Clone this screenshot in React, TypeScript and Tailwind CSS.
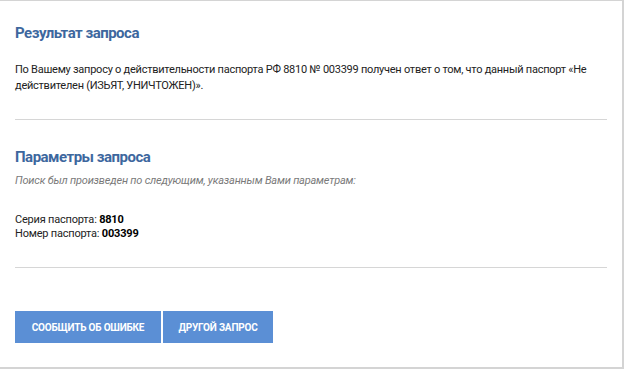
export default function App() {
  return (
    <div className="w-[624px] h-[370px] bg-white" style={{ fontFamily: 'Roboto, "Noto Sans", sans-serif' }}>
      <div className="h-[369px] border-t border-r-2 border-b-2 border-[#d4d4d4] pl-[15px] pr-[15px] flex flex-col">
        <h2 className="mt-[22px] text-[15px] leading-[20px] font-bold tracking-[-0.5px] text-[#3d679e]">
          Результат запроса
        </h2>
        <p className="mt-[19px] text-[11px] leading-[16px] tracking-[-0.25px] text-[#222]">
          <span className="whitespace-nowrap">
            По Вашему запросу о действительности паспорта РФ 8810 № 003399 получен ответ о том, что данный паспорт «Не
          </span>
          <br />
          действителен (ИЗЬЯТ, УНИЧТОЖЕН)».
        </p>
        <div className="mt-[25px] border-t border-[#d6d6d6]" />
        <h2 className="mt-[27px] text-[15px] leading-[20px] font-bold tracking-[-0.5px] text-[#3d679e]">
          Параметры запроса
        </h2>
        <p className="mt-[6px] text-[11px] leading-[16px] italic tracking-[-0.2px] text-[#7a7a7a]">
          Поиск был произведен по следующим, указанным Вами параметрам:
        </p>
        <div className="mt-[24px] text-[11px] leading-[14px] tracking-[-0.2px] text-[#222]">
          <div>
            Серия паспорта: <b className="text-black">8810</b>
          </div>
          <div>
            Номер паспорта: <b className="text-black">003399</b>
          </div>
        </div>
        <div className="mt-[26px] border-t border-[#d6d6d6]" />
        <div className="mt-[43px] flex gap-[2px]">
          <button className="w-[146px] h-[32px] bg-[#5b8fd5] text-white text-[10px] font-bold uppercase tracking-[-0.2px]">
            Сообщить об ошибке
          </button>
          <button className="w-[110px] h-[32px] bg-[#5b8fd5] text-white text-[10px] font-bold uppercase tracking-[-0.2px]">
            Другой запрос
          </button>
        </div>
      </div>
    </div>
  );
}
